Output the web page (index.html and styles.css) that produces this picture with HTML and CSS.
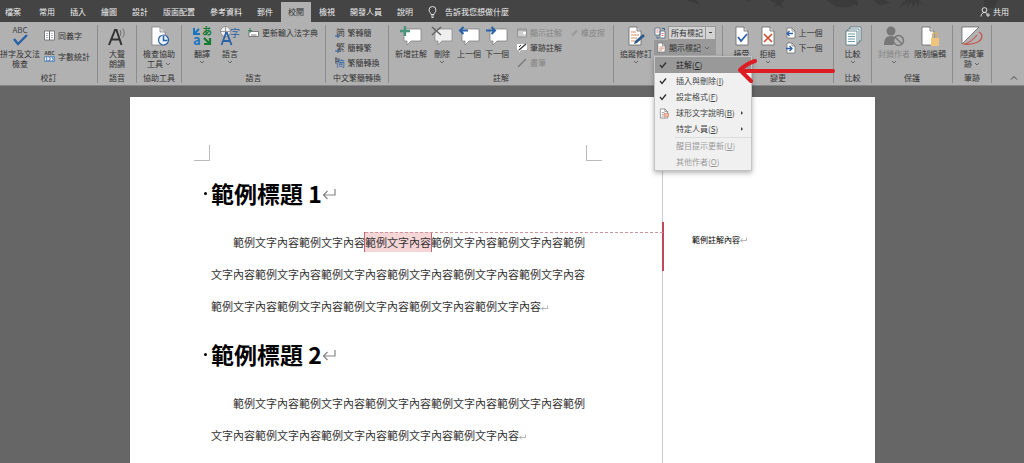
FILE: index.html
```
<!DOCTYPE html>
<html lang="zh-Hant">
<head>
    <meta charset="UTF-8">
    <meta name="viewport" content="width=device-width, initial-scale=1.0">
    <title>校閱</title>
    <link rel="stylesheet" href="styles.css">
</head>
<body>
    <!-- Shared symbols -->
    <svg class="defs" aria-hidden="true">
        <symbol id="chevron" viewBox="0 0 6 6"><path d="M1 2l2 2 2-2" fill="none" stroke="#555" stroke-width=".8"/></symbol>
        <symbol id="return" viewBox="0 0 14 12"><path d="M13 1v6H1.500M5.500 3L1.500 7l4 4" fill="none" stroke="#858585" stroke-width="1.200"/></symbol>
        <symbol id="bubble" viewBox="0 0 20 20"><path d="M2 3h17v12h-10l-4 4v-4H2z" fill="#fff" stroke="#777" stroke-width=".7"/></symbol>
        <symbol id="sheet" viewBox="0 0 16 20"><path d="M2 1h8l4 4v14H2z" fill="#fff" stroke="#666" stroke-width=".8"/><path d="M10 1v4h4" fill="#ddd" stroke="#666" stroke-width=".8"/></symbol>
        <symbol id="check" viewBox="0 0 8 8"><path d="M1 4l2 2.500 4-5" fill="none" stroke="#333" stroke-width="1.400"/></symbol>
        <symbol id="page" viewBox="0 0 10 12"><path d="M1 1h5l3 3v7H1z" fill="#fff" stroke="#666" stroke-width=".7"/><path d="M6 1v3h3" fill="none" stroke="#666" stroke-width=".7"/></symbol>
    </svg>

    <header class="titlebar">
        <svg class="doodles" viewBox="0 0 330 10" aria-hidden="true">
            <path d="M2 0l14 5-4-5zM62 0l3 2 2-2zM86 0l6 4-3 4 5-3 5 3-2-5 4-3zM143 0q8 9 22 7l6-3 3 3V0zM190 0l4 5 12-2-5-3zM216 7q2-5 6-6l-2-1h15l5 6-5-4v5l-3-5-3 5-2-5-4 6 1-6zM300 0v8h10l4-8z" fill="#3b3b3b"/>
        </svg>
        <nav class="tabs">
            <a class="tab file" href="#">檔案</a>
            <a class="tab" href="#">常用</a>
            <a class="tab" href="#">插入</a>
            <a class="tab" href="#">繪圖</a>
            <a class="tab" href="#">設計</a>
            <a class="tab" href="#">版面配置</a>
            <a class="tab" href="#">參考資料</a>
            <a class="tab" href="#">郵件</a>
            <a class="tab active" href="#">校閱</a>
            <a class="tab" href="#">檢視</a>
            <a class="tab" href="#">開發人員</a>
            <a class="tab" href="#">說明</a>
        </nav>
        <button class="tell-me">
            <svg width="9" height="12" viewBox="0 0 9 12"><path d="M3 8.500C3 7 1 6 1 4a3.500 3.500 0 0 1 7 0c0 2-2 3-2 4.500zM3 10h3M3.500 11.500h2" fill="none" stroke="#eee" stroke-width=".9"/></svg>
            告訴我您想做什麼
        </button>
        <button class="share">
            <svg width="10" height="10" viewBox="0 0 10 10"><circle cx="4.500" cy="3" r="2.400" fill="none" stroke="#eee" stroke-width=".9"/><path d="M1 9.500c0-2.500 1.500-4 3.500-4 1 0 2 .5 2.500 1M6 8h4M8 6v4" fill="none" stroke="#eee" stroke-width=".9"/></svg>
            共用
        </button>
    </header>

    <section class="ribbon">
        <div class="group">
            <div class="tools proof-tools">
                <button class="big">
                    <svg width="20" height="20" viewBox="0 0 20 20"><text x="10" y="7" text-anchor="middle" class="glyph abc">ABC</text><path d="M4 13l4 5 9-9" fill="none" stroke="#2b61a5" stroke-width="2.400"/></svg>
                    <span>拼字及文法<br>檢查</span>
                </button>
                <div class="stack tall">
                    <button class="small"><svg width="11" height="11" viewBox="0 0 11 11"><path d="M.5 1h10v9H.5z" fill="#fff" stroke="#666" stroke-width=".8"/><path d="M5.500 1v9" stroke="#666"/><path d="M2 3.500h2M2 5.500h2M2 7.500h2M7 3.500h2M7 5.500h2M7 7.500h2" stroke="#89a" stroke-width=".7"/></svg>同義字</button>
                    <button class="small"><svg width="11" height="11" viewBox="0 0 11 11"><text x="5.500" y="4" text-anchor="middle" class="glyph tiny">ABC</text><path d="M.5 5.500h10v5H.5z" fill="#eef4fa" stroke="#3c78a8" stroke-width=".7"/><text x="5.500" y="10" text-anchor="middle" class="glyph tiny blue">123</text></svg>字數統計</button>
                </div>
            </div>
            <h2>校訂</h2>
        </div>

        <div class="group">
            <div class="tools">
                <button class="big">
                    <svg width="20" height="20" viewBox="0 0 20 20"><path d="M2 19L8 4h1.500l5 15M4.500 13.500h8" fill="none" stroke="#333" stroke-width="2"/><path d="M13 4q2 3 0 6M15.500 2.500q3.500 4.500 0 9" fill="none" stroke="#666" stroke-width=".9"/></svg>
                    <span>大聲<br>朗讀</span>
                </button>
            </div>
            <h2>語音</h2>
        </div>

        <div class="group">
            <div class="tools">
                <button class="big">
                    <svg width="20" height="20" viewBox="0 0 20 20"><path d="M3 1h8l5 5v13H3z" fill="#fff" stroke="#777" stroke-width=".7"/><path d="M11 1v5h5" fill="#ddd" stroke="#777" stroke-width=".7"/><circle cx="14.500" cy="14" r="5" fill="#e8f0f8" stroke="#2b61a5" stroke-width="1.200"/><path d="M14.500 10v4.500h4" fill="none" stroke="#2b61a5" stroke-width="1.500"/></svg>
                    <span>檢查協助<br>工具 <svg width="6" height="6"><use href="#chevron"/></svg></span>
                </button>
            </div>
            <h2>協助工具</h2>
        </div>

        <div class="group">
            <div class="tools lang-tools">
                <button class="big">
                    <svg width="20" height="20" viewBox="0 0 20 20"><text x="10" y="9" class="glyph kana">あ</text><text x="1" y="19" class="glyph latin">a</text><path d="M2 2v6h6M2.500 7.500L7 3" fill="none" stroke="#1b74bf" stroke-width="2"/><path d="M12 18h6v-6M17 17l-5-5" fill="none" stroke="#157a32" stroke-width="2.200"/></svg>
                    <span>翻譯</span>
                    <svg width="6" height="6"><use href="#chevron"/></svg>
                </button>
                <button class="big">
                    <svg width="20" height="20" viewBox="0 0 20 20"><circle cx="5.500" cy="5.500" r="5" fill="#eee" stroke="#777" stroke-width=".7"/><path d="M.5 5.500h10M5.500.5v10" stroke="#777" stroke-width=".7"/><path d="M1.500 19l4.500-12h1l4.500 12M3.500 15h6" fill="none" stroke="#2b61a5" stroke-width="1.800"/><text x="10" y="11" class="glyph zi">字</text></svg>
                    <span>語言</span>
                    <svg width="6" height="6"><use href="#chevron"/></svg>
                </button>
                <div class="stack">
                    <button class="small"><svg width="11" height="10" viewBox="0 0 11 10"><path d="M1 3.500h9.500v5H1z" fill="#fff" stroke="#555" stroke-width=".7"/><path d="M3 7h5.500" stroke="#555" stroke-width=".8"/><path d="M2 0v5M0 2.500h4" stroke="#39835f"/></svg>更新輸入法字典</button>
                </div>
            </div>
            <h2>語言</h2>
        </div>

        <div class="group">
            <div class="tools">
                <div class="stack">
                    <button class="small"><svg width="10" height="11" viewBox="0 0 10 11"><text x="1" y="9" class="glyph conv">简</text><path d="M0 9h4M2.500 7L4.500 9l-2 2" fill="none" stroke="#2b61a5"/></svg>繁轉簡</button>
                    <button class="small"><svg width="10" height="11" viewBox="0 0 10 11"><text x="1" y="9" class="glyph conv">繁</text><path d="M0 9h4M2.500 7L4.500 9l-2 2" fill="none" stroke="#2b61a5"/></svg>簡轉繁</button>
                    <button class="small"><svg width="10" height="11" viewBox="0 0 10 11"><path d="M0 2h5M1 0v7M0 4.500h4" stroke="#444" stroke-width=".8"/><text x="1" y="10" class="glyph conv blue">简</text></svg>繁簡轉換</button>
                </div>
            </div>
            <h2>中文繁簡轉換</h2>
        </div>

        <div class="group">
            <div class="tools comment-tools">
                <button class="big">
                    <svg width="22" height="20" viewBox="0 0 22 20"><use href="#bubble" x="2" width="20" height="20"/><path d="M5 0v10M0 5h10" stroke="#4a957b" stroke-width="2.400"/></svg>
                    <span>新增註解</span>
                </button>
                <button class="big">
                    <svg width="22" height="20" viewBox="0 0 22 20"><use href="#bubble" x="2" width="20" height="20" opacity=".8"/><path d="M1 1l9 8M10 1L1 9" stroke="#666" stroke-width="1.600"/></svg>
                    <span>刪除</span>
                    <svg width="6" height="6"><use href="#chevron"/></svg>
                </button>
                <button class="big">
                    <svg width="22" height="20" viewBox="0 0 22 20"><use href="#bubble" x="2" width="20" height="20"/><path d="M10 4.500H2M5.500 1L2 4.500 5.500 8" fill="none" stroke="#2b61a5" stroke-width="2"/></svg>
                    <span>上一個</span>
                </button>
                <button class="big">
                    <svg width="22" height="20" viewBox="0 0 22 20"><use href="#bubble" x="2" width="20" height="20"/><path d="M0 4.500h9M5.500 1L9 4.500 5.500 8" fill="none" stroke="#2b61a5" stroke-width="2"/></svg>
                    <span>下一個</span>
                </button>
                <div class="stack">
                    <button class="small" disabled><svg width="10" height="10" viewBox="0 0 10 10"><path d="M.5 1h9v8h-9z" fill="#ccc" stroke="#888" stroke-width=".8"/><path d="M.5 2h9" stroke="#888"/><path d="M6 4h3v2H8L7 7.500V6H6z" fill="#fff"/></svg>顯示註解</button>
                    <button class="small"><svg width="10" height="10" viewBox="0 0 10 10"><path d="M0 1h10v6H4L2 9.500V7H0z" fill="#fff"/><path d="M2 7l7-6" stroke="#333" stroke-width="1.300"/><path d="M2 4l2-2" stroke="#333"/></svg>筆跡註解</button>
                    <button class="small" disabled><svg width="10" height="10" viewBox="0 0 10 10"><path d="M1 9l8-8" stroke="#777" stroke-width="1.300"/></svg>畫筆</button>
                </div>
                <div class="stack">
                    <button class="small" disabled><svg width="8" height="10" viewBox="0 0 8 10"><path d="M1 7l5-5 2 1-5 5z" fill="#999"/></svg>橡皮擦</button>
                </div>
            </div>
            <h2>註解</h2>
        </div>

        <div class="group">
            <div class="tools track-tools">
                <button class="big">
                    <svg width="18" height="20" viewBox="0 0 18 20"><use href="#sheet" width="16" height="20"/><path d="M4 6h5M4 9h8M4 12h6M4 15h4" stroke="#dc8a5e"/><path d="M7 18l1-3 8-7 2 2-8 7z" fill="#2b5a8c"/></svg>
                    <span>追蹤修訂</span>
                    <svg width="6" height="6"><use href="#chevron"/></svg>
                </button>
                <div class="stack">
                    <label class="markup-row">
                        <svg width="12" height="12" viewBox="0 0 12 12"><path d="M1 1h5v7H1zM6 4h5v7H6z" fill="#fff" stroke="#567" stroke-width=".8"/><path d="M2.500 3h2M2.500 5h2M7.500 6.500h2M7.500 8.500h2" stroke="#c55" stroke-width=".8"/><path d="M8 1.500h2.500V3M3 9.500V11h2" fill="none" stroke="#2b61a5"/></svg>
                        <select aria-label="顯示供檢閱"><option>所有標記</option></select>
                    </label>
                    <div class="menu-anchor">
                        <button class="small pressed" aria-haspopup="menu" aria-expanded="true"><svg width="9" height="11" viewBox="0 0 10 12"><use href="#page" width="10" height="12"/><path d="M2.500 5.500h5M2.500 7.500h5M2.500 9h3" stroke="#c86c50" stroke-width=".8"/></svg>顯示標記<svg width="6" height="6"><use href="#chevron"/></svg></button>
                        <div class="menu" role="menu">
                            <button class="item selected" role="menuitemcheckbox" aria-checked="true"><svg width="8" height="8"><use href="#check"/></svg><span>註解(<u>C</u>)</span></button>
                            <button class="item" role="menuitemcheckbox" aria-checked="true"><svg width="8" height="8"><use href="#check"/></svg><span>插入與刪除(<u>I</u>)</span></button>
                            <button class="item" role="menuitemcheckbox" aria-checked="true"><svg width="8" height="8"><use href="#check"/></svg><span>設定格式(<u>F</u>)</span></button>
                            <button class="item" role="menuitem"><svg width="10" height="11" viewBox="0 0 10 12"><use href="#page" width="10" height="12"/><path d="M2.500 5h3M2.500 7h2M2.500 9h2" stroke="#777" stroke-width=".7"/><path d="M5 6h5v3H7.500L6 10.500V9H5z" fill="#f7c2a8" stroke="#c86c50" stroke-width=".6"/></svg><span>球形文字說明(<u>B</u>)</span><i class="arrow"></i></button>
                            <button class="item" role="menuitem"><span>特定人員(<u>S</u>)</span><i class="arrow"></i></button>
                            <hr>
                            <button class="item" role="menuitem" disabled><span>醒目提示更新(<u>U</u>)</span></button>
                            <button class="item" role="menuitem" disabled><span>其他作者(<u>O</u>)</span></button>
                        </div>
                    </div>
                </div>
            </div>
            <h2>追蹤</h2>
        </div>

        <div class="group changes">
            <div class="tools change-tools">
                <button class="big">
                    <svg width="16" height="20" viewBox="0 0 16 20"><use href="#sheet" width="16" height="20"/><path d="M4 11l3 4 6-7" fill="none" stroke="#2b61a5" stroke-width="1.800"/></svg>
                    <span>接受</span>
                </button>
                <button class="big">
                    <svg width="16" height="20" viewBox="0 0 16 20"><use href="#sheet" width="16" height="20"/><path d="M4 8l8 8M12 8l-8 8" stroke="#cf4b2b" stroke-width="1.600"/></svg>
                    <span>拒絕</span>
                    <svg width="6" height="6"><use href="#chevron"/></svg>
                </button>
                <div class="stack">
                    <button class="small"><svg width="10" height="12" viewBox="0 0 10 12"><use href="#page" width="10" height="12"/><path d="M7 6.500H1M3.500 4L1 6.500 3.500 9" fill="none" stroke="#2b61a5" stroke-width="1.300"/></svg>上一個</button>
                    <button class="small"><svg width="10" height="12" viewBox="0 0 10 12"><use href="#page" width="10" height="12"/><path d="M0 6.500h6M3.500 4L6 6.500 3.500 9" fill="none" stroke="#2b61a5" stroke-width="1.300"/></svg>下一個</button>
                </div>
            </div>
            <h2>變更</h2>
            <svg class="pointer" width="100" height="26" viewBox="0 0 100 26" aria-hidden="true"><path d="M97 14H5M19 4C13 6 8 9 4 13c3 3 6 6 11 11" fill="none" stroke="#dc1e24" stroke-width="4" stroke-linecap="round" stroke-linejoin="round"/></svg>
        </div>

        <div class="group">
            <div class="tools">
                <button class="big">
                    <svg width="18" height="20" viewBox="0 0 18 20"><path d="M6 1h11v14H6z" fill="#fff" stroke="#4a7078" stroke-width=".8"/><path d="M4 3h11v14H4z" fill="#fff" stroke="#4a7078" stroke-width=".8"/><path d="M2 5h11v14H2z" fill="#fff" stroke="#4a7078" stroke-width=".8"/><path d="M4 8h7M4 10.500h7M4 13h7M4 15.500h7" stroke="#6b9aa4"/></svg>
                    <span>比較</span>
                    <svg width="6" height="6"><use href="#chevron"/></svg>
                </button>
            </div>
            <h2>比較</h2>
        </div>

        <div class="group">
            <div class="tools">
                <button class="big" disabled>
                    <svg width="22" height="20" viewBox="0 0 22 20"><circle cx="8" cy="5" r="4.500" fill="#777"/><path d="M1 19c0-6 2-9 7-9 3 0 5 1 6 3l-4 6z" fill="#777"/><circle cx="15.500" cy="14.500" r="5" fill="#b1b1b1" stroke="#777" stroke-width="1.500"/><path d="M12 11l7 7" stroke="#777" stroke-width="1.500"/></svg>
                    <span>封鎖作者</span>
                    <svg width="6" height="6"><use href="#chevron"/></svg>
                </button>
                <button class="big">
                    <svg width="20" height="20" viewBox="0 0 20 20"><use href="#sheet" width="16" height="20"/><path d="M12.500 12V9.500a2.500 2.500 0 0 1 5 0V12" fill="none" stroke="#d9ae66" stroke-width="1.300"/><path d="M11 12h8v8h-8z" fill="#efc47c"/></svg>
                    <span>限制編輯</span>
                </button>
            </div>
            <h2>保護</h2>
        </div>

        <div class="group">
            <div class="tools">
                <button class="big">
                    <svg width="22" height="20" viewBox="0 0 22 20"><path d="M1 1h17L1 18z" fill="#fff" stroke="#555" stroke-width=".7"/><path d="M18 6c4 2 4 7-1 10-4 2-9 3-15 2 5 0 10-4 14-9" fill="none" stroke="#c4574c" stroke-width="1.200"/></svg>
                    <span>隱藏筆<br>跡 <svg width="6" height="6"><use href="#chevron"/></svg></span>
                </button>
            </div>
            <h2>筆跡</h2>
        </div>

        <div class="group last">
            <button class="collapse" aria-label="摺疊功能區"><svg width="8" height="6" viewBox="0 0 8 6"><path d="M1 4.500l3-3 3 3" fill="none" stroke="#444"/></svg></button>
        </div>
    </section>

    <main class="workspace">
        <div class="page">
            <article class="document">
                <div class="crop-marks"><i class="crop left"></i><i class="crop right"></i></div>
                <h1>範例標題 1<svg width="14" height="12"><use href="#return"/></svg></h1>
                <p>範例文字內容範例文字內容<mark>範例文字內容</mark>範例文字內容範例文字內容範例文字內容範例文字內容範例文字內容範例文字內容範例文字內容範例文字內容範例文字內容範例文字內容範例文字內容範例文字內容範例文字內容<svg width="7" height="6"><use href="#return"/></svg></p>
                <h1>範例標題 2<svg width="14" height="12"><use href="#return"/></svg></h1>
                <p>範例文字內容範例文字內容範例文字內容範例文字內容範例文字內容範例文字內容範例文字內容範例文字內容範例文字內容範例文字內容<svg width="7" height="6"><use href="#return"/></svg></p>
            </article>
            <aside class="comments">
                <div class="comment">範例註解內容<svg width="7" height="6"><use href="#return"/></svg></div>
            </aside>
        </div>
    </main>
</body>
</html>
```

FILE: styles.css
```
/* Base styles */
* {
    box-sizing: border-box;
}

body {
    margin: 0;
    min-height: 100vh;
    display: flex;
    flex-direction: column;
    overflow: hidden;
    background: #666;
    color: #333;
    font-family: "Noto Sans CJK TC", "Open Sans", sans-serif;
    font-size: 8px;
    line-height: 10px;
}

button,
select {
    margin: 0;
    padding: 0;
    border: none;
    background: none;
    color: inherit;
    font: inherit;
}

svg {
    flex: none;
    overflow: visible;
}

.defs {
    position: absolute;
    width: 0;
    height: 0;
}

.glyph {
    fill: #444;
}

.abc {
    font-size: 8px;
}

.tiny {
    font-size: 5px;
    font-weight: bold;
}

.kana {
    font-size: 10px;
    font-weight: bold;
    fill: #157a32;
}

.latin {
    font-size: 13px;
    font-weight: bold;
    fill: #1b74bf;
}

.zi {
    font-size: 10px;
    fill: #2b61a5;
}

.conv {
    font-size: 9px;
}

.blue {
    fill: #2b61a5;
}

/* Title bar */
.titlebar {
    position: relative;
    display: flex;
    height: 22px;
    padding-top: 2px;
    background: #444;
    color: #f0f0f0;
}

.doodles {
    position: absolute;
    top: 0;
    right: 10px;
    width: 330px;
    height: 10px;
}

.tabs {
    display: flex;
    gap: 1px;
}

.tab {
    padding: 0 7px;
    color: inherit;
    line-height: 20px;
    text-decoration: none;
}

.tab.file {
    padding: 0 10px 0 5px;
}

.tab.active {
    background: #b1b1b1;
    color: #333;
}

.tell-me,
.share {
    display: flex;
    align-items: center;
    gap: 8px;
    padding-left: 8px;
}

.share {
    position: relative;
    gap: 3px;
    margin-left: auto;
    padding-right: 15px;
}

/* Ribbon */
.ribbon {
    display: grid;
    grid-template-columns: 98fr 39fr 45fr 144fr 63fr 225fr 109fr 111fr 38fr 81fr 39fr 32fr;
    padding: 3px 0 2px;
    background: #b1b1b1;
    border-bottom: 1px solid #858585;
}

.group {
    display: flex;
    flex-direction: column;
    min-width: 0;
    border-right: 1px solid #8c8c8c;
    white-space: nowrap;
}

.group.last {
    align-items: flex-end;
    justify-content: flex-end;
    padding-right: 6px;
    border: none;
}

.group h2 {
    margin: 0;
    font-size: 8px;
    font-weight: normal;
    text-align: center;
}

.tools {
    display: flex;
    flex: 1;
    justify-content: center;
    align-items: flex-start;
    gap: 4px;
    min-height: 48px;
}

.big {
    display: flex;
    flex-direction: column;
    align-items: center;
    padding-top: 1px;
}

.big span {
    margin-top: 3px;
}

.stack {
    display: flex;
    flex-direction: column;
}

.small {
    display: flex;
    align-items: center;
    gap: 3px;
    height: 15px;
}

.tall .small {
    height: 21px;
}

.ribbon button:disabled {
    color: #858585;
}

.proof-tools,
.lang-tools,
.comment-tools {
    justify-content: flex-start;
}

.lang-tools {
    gap: 8px;
    padding-left: 10px;
}

.comment-tools {
    padding-left: 6px;
}

.comment-tools .stack {
    padding-left: 4px;
}

.track-tools {
    gap: 2px;
}

.change-tools {
    gap: 10px;
}

.markup-row {
    display: flex;
    align-items: center;
    gap: 2px;
    height: 15px;
}

.markup-row select {
    width: 48px;
    height: 14px;
    padding-left: 2px;
    appearance: none;
    border: 1px solid #999;
    background: linear-gradient(#444, #444) right 3px center / 3px 1px no-repeat, linear-gradient(#999, #999) right 9px center / 1px 100% no-repeat, #d2d2d2;
}

.menu-anchor {
    position: relative;
}

.pressed {
    padding: 0 6px 0 3px;
    background: #999;
}

/* Show markup menu */
.menu {
    position: absolute;
    z-index: 2;
    top: 16px;
    left: 0;
    width: 98px;
    background: #f0f0f0;
    border: 1px solid #c4c4c4;
    box-shadow: 0 2px 5px rgba(0, 0, 0, 0.3);
}

.item {
    display: grid;
    grid-template-columns: 14px 1fr 6px;
    align-items: center;
    gap: 3px;
    width: 100%;
    height: 16px;
    padding: 0 4px;
    color: #444;
    text-align: left;
}

.item span {
    grid-column: 2;
}

.item.selected {
    background: #999;
    color: #222;
}

.ribbon .item:disabled {
    color: #999;
}

.arrow {
    border: 2px solid transparent;
    border-left-color: #444;
}

.menu hr {
    margin: 0 0 0 20px;
    border: none;
    border-top: 1px solid #ddd;
}

/* Red arrow over the ribbon */
.changes {
    position: relative;
}

.pointer {
    position: absolute;
    z-index: 3;
    right: -3px;
    bottom: 0;
}

/* Document */
.workspace {
    display: flex;
    flex: 1;
    padding: 11px 149px 0 130px;
}

.page {
    display: grid;
    flex: 1;
    grid-template-columns: 1fr 213px;
    background: #fff;
}

.document {
    padding: 48px 77px 0 81px;
    font-size: 11px;
    line-height: 32px;
}

.crop-marks {
    display: flex;
    justify-content: space-between;
    height: 16px;
    margin: 0 -17px;
}

.crop {
    width: 16px;
    border-bottom: 1px solid #bbb;
}

.crop.left {
    border-right: 1px solid #bbb;
}

.crop.right {
    border-left: 1px solid #bbb;
}

.document h1 {
    display: flex;
    align-items: center;
    margin: 0 0 0 -7px;
    color: #000;
    font-size: 23px;
    line-height: 65px;
}

.document h1::before {
    content: "";
    width: 3px;
    height: 3px;
    margin-right: 4px;
    border-radius: 50%;
    background: #000;
}

.document p {
    margin: 0;
    text-indent: 2em;
    word-break: break-all;
}

.document mark {
    position: relative;
    padding: 2px 0;
    background: #f6d5d7;
    box-shadow: -1px 0 #c26470, 1px 0 #c26470;
    color: inherit;
}

/* Connector from the marked text to its comment */
.document mark::after {
    content: "";
    position: absolute;
    top: 0;
    left: 0;
    width: 298px;
    border-top: 1px dashed #c9949b;
}

.comments {
    padding-top: 125px;
    border-left: 1px solid #ccc;
}

.comment {
    height: 49px;
    margin-left: -1px;
    padding: 13px 28px;
    border-left: 2px solid #c0485a;
    color: #000;
}
```
